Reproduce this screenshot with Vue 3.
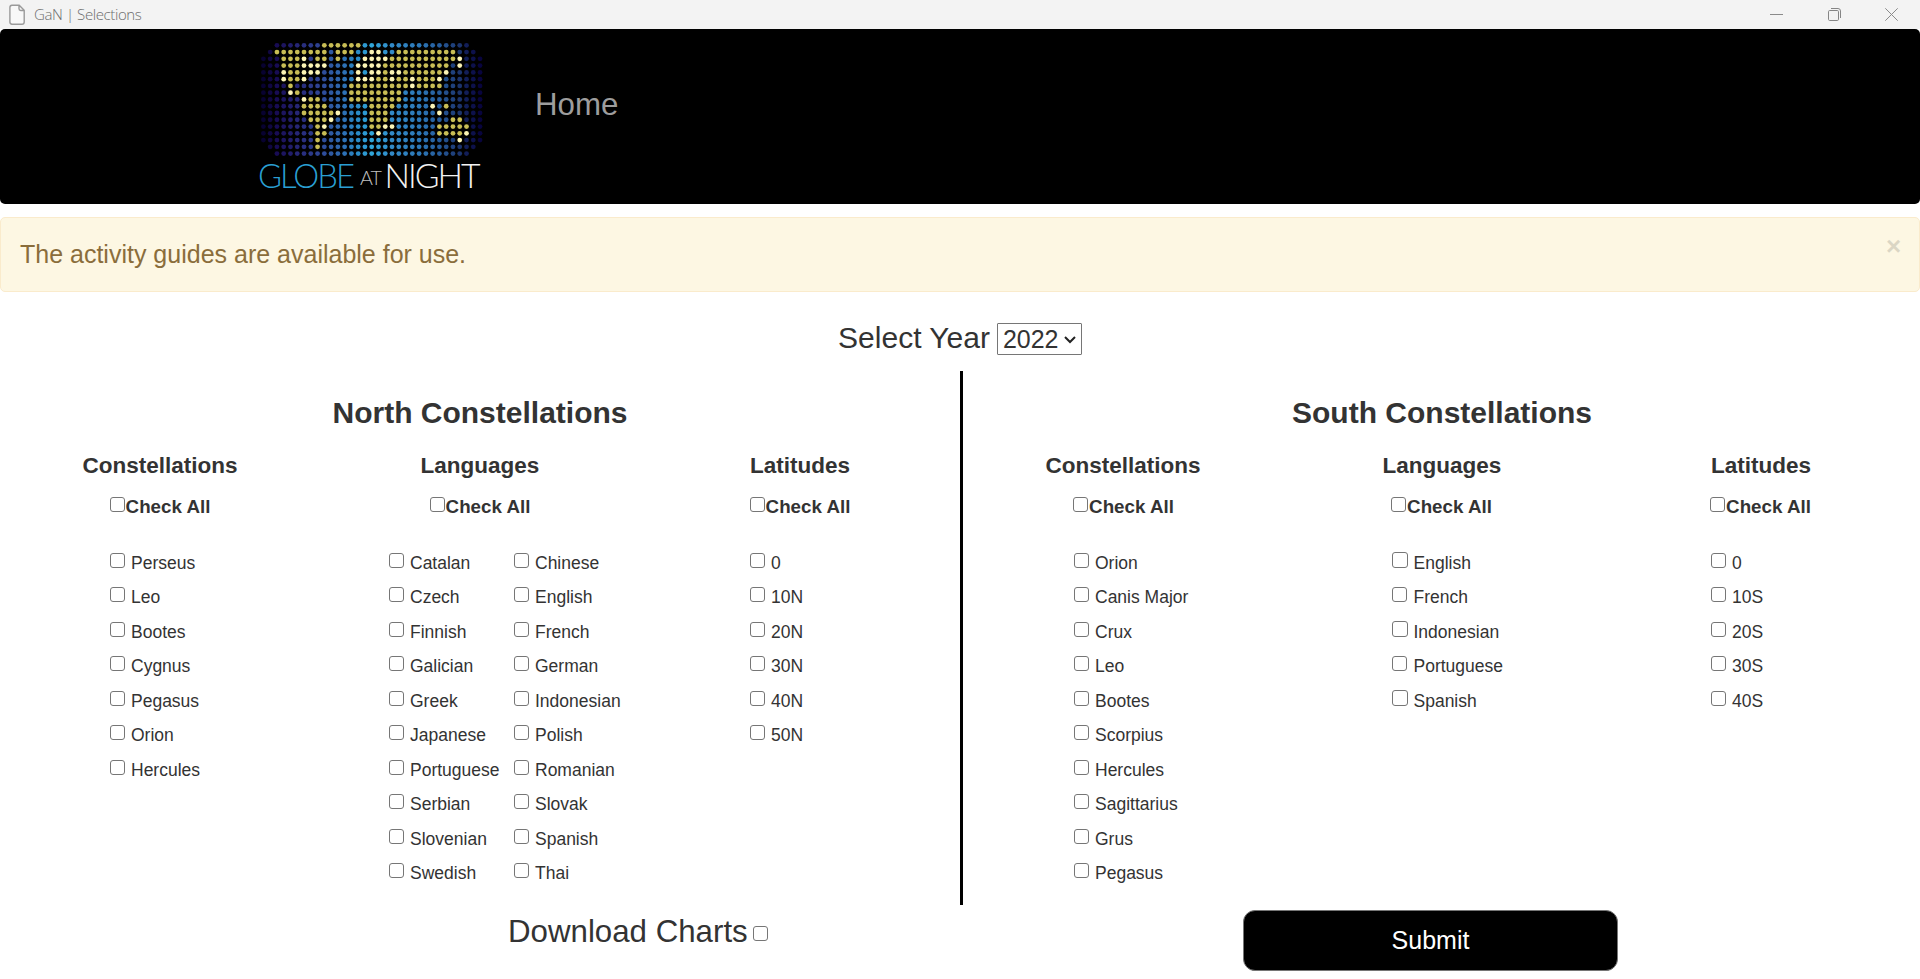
<script setup>
import { ref } from 'vue'

const landRows = [
  '.........yyyyyy..................',
  '..yyyyyyyy.yyy..ww..yyyyyyyyy....',
  '...yyyw.yy.y...wwwwyyyyyyyyyyw...',
  '...yyywwww....wwwwyyyyyyyyyy.w...',
  '...wyywww.....w.wwywwyyyyyyw.....',
  '...wyyw.......wwwyywyywyyyw......',
  '....y........yyyyyyyyywyyyy......',
  '....wy.......yyyyyyyy............',
  '......wyy....yyyyyyyy............',
  '......yyyy......yyyy.....w.y.....',
  '......yyyyyw....yyy.......w......',
  '.......yyyw.....yyy.........yy...',
  '........yw......yyww......yyyyy..',
  '........yy.......w........yyyyw..',
  '........y....................w...',
  '........y........................',
  '.................................',
]

const stops = [
  [0, [8, 2, 48]], [2, [24, 12, 84]], [5, [38, 38, 118]], [8, [46, 66, 146]],
  [11, [46, 100, 172]], [14, [42, 140, 200]], [16, [48, 166, 218]], [19, [50, 138, 200]],
  [23, [44, 120, 184]], [26, [38, 92, 156]], [29, [28, 52, 108]], [30, [18, 30, 88]],
  [32, [8, 4, 62]],
]

function seaColor(col) {
  const i = Math.max(1, stops.findIndex(([at]) => at >= col))
  const [a, from] = stops[i - 1]
  const [b, to] = stops[i]
  const t = (col - a) / (b - a)
  return `rgb(${from.map((v, k) => Math.round(v + (to[k] - v) * t)).join(',')})`
}

const dots = []
landRows.forEach((row, r) => {
  const inset = r === 0 || r === 16 ? 2 : r === 1 || r === 15 ? 1 : 0
  for (let c = inset; c < 33 - inset; c++) {
    const kind = row[c]
    const fill = kind === 'y' ? '#c8bd55' : kind === 'w' ? '#fbf3b4' : seaColor(c)
    dots.push({ id: `${r}-${c}`, x: 5.4 + c * 6.77, y: 6.3 + r * 6.77, fill })
  }
})

const year = ref('2022')
const alertOpen = ref(true)

const panels = [
  {
    id: 'north',
    title: 'North Constellations',
    groups: [
      { title: 'Constellations', cls: 'constellations', lists: [['Perseus', 'Leo', 'Bootes', 'Cygnus', 'Pegasus', 'Orion', 'Hercules']] },
      {
        title: 'Languages',
        cls: 'languages',
        lists: [
          ['Catalan', 'Czech', 'Finnish', 'Galician', 'Greek', 'Japanese', 'Portuguese', 'Serbian', 'Slovenian', 'Swedish'],
          ['Chinese', 'English', 'French', 'German', 'Indonesian', 'Polish', 'Romanian', 'Slovak', 'Spanish', 'Thai'],
        ],
      },
      { title: 'Latitudes', cls: 'latitudes', lists: [['0', '10N', '20N', '30N', '40N', '50N']] },
    ],
  },
  {
    id: 'south',
    title: 'South Constellations',
    groups: [
      { title: 'Constellations', cls: 'constellations', lists: [['Orion', 'Canis Major', 'Crux', 'Leo', 'Bootes', 'Scorpius', 'Hercules', 'Sagittarius', 'Grus', 'Pegasus']] },
      { title: 'Languages', cls: 'languages', lists: [['English', 'French', 'Indonesian', 'Portuguese', 'Spanish']] },
      { title: 'Latitudes', cls: 'latitudes', lists: [['0', '10S', '20S', '30S', '40S']] },
    ],
  },
]
</script>

<template>
  <div class="window">
    <div class="titlebar">
      <svg class="file-icon" width="17" height="22" viewBox="0 0 17 22">
        <path d="M3 1.2h7.2l5 5V18a2.2 2.2 0 0 1-2.2 2.200H3A2.200 2.200 0 0 1 .9 18V3.400A2.200 2.200 0 0 1 3 1.200zM10 1.500v3.300a1.700 1.700 0 0 0 1.700 1.700H15" fill="#f8f8f8" stroke="#9a9a9a" stroke-width="1.400" />
      </svg>
      <span class="window-title">GaN | Selections</span>
      <div class="controls">
        <svg width="13" height="13" viewBox="0 0 13 13"><path d="M0 6.5h13" stroke="#8a8a8a" /></svg>
        <svg width="13" height="13" viewBox="0 0 13 13" fill="none" stroke="#858585">
          <rect x=".5" y="2.500" width="10" height="10" rx="1.200" />
          <path d="M3 .5h7a2.500 2.500 0 0 1 2.500 2.500v7" />
        </svg>
        <svg width="13" height="13" viewBox="0 0 13 13"><path d="M.3.3l12.400 12.400M12.700.3L.3 12.700" stroke="#8a8a8a" /></svg>
      </div>
    </div>

    <nav class="navbar">
      <svg class="logo" width="228" height="160" viewBox="0 0 228 160">
        <circle v-for="d in dots" :key="d.id" :cx="d.x" :cy="d.y" r="2.400" :fill="d.fill" />
        <g class="logo-text">
          <text class="word" x="0" y="149" textLength="95" lengthAdjust="spacingAndGlyphs" fill="#2a9fd2">GLOBE</text>
          <text class="at" x="102" y="146" textLength="21" lengthAdjust="spacingAndGlyphs" fill="#c0c0c0">AT</text>
          <text class="word" x="126.500" y="149" textLength="94" lengthAdjust="spacingAndGlyphs" fill="#f2f2f2">NIGHT</text>
        </g>
      </svg>
      <a class="home">Home</a>
    </nav>

    <div v-if="alertOpen" class="alert">
      <span>The activity guides are available for use.</span>
      <button class="close" aria-label="Close" @click="alertOpen = false">×</button>
    </div>

    <div class="year-row">
      <span>Select Year</span>
      <button class="year-select">
        {{ year }}
        <svg width="12" height="8" viewBox="0 0 12 8"><path d="M1 1l5 5 5-5" fill="none" stroke="#222" stroke-width="2" /></svg>
      </button>
    </div>

    <main class="panels">
      <section v-for="p in panels" :key="p.id" :class="['panel', p.id]">
        <h2>{{ p.title }}</h2>
        <div class="groups">
          <div v-for="g in p.groups" :key="g.title" :class="['group', g.cls]">
            <h3>{{ g.title }}</h3>
            <label class="check-all"><input type="checkbox" />Check All</label>
            <div class="lists">
              <ul v-for="(list, i) in g.lists" :key="i">
                <li v-for="name in list" :key="name">
                  <label><input type="checkbox" />{{ name }}</label>
                </li>
              </ul>
            </div>
          </div>
        </div>
      </section>
    </main>

    <footer class="actions">
      <label class="download">Download Charts<input type="checkbox" /></label>
      <button class="submit">Submit</button>
    </footer>
  </div>
</template>

<style>
html,
body {
  margin: 0;
  background: #fff;
}
</style>

<style scoped>
.window {
  width: 1920px;
  height: 979px;
  overflow: hidden;
  display: flex;
  flex-direction: column;
  background: #fff;
  color: #333;
  font-family: "Liberation Sans", Arial, sans-serif;
  font-size: 17.5px;
}

.window * {
  box-sizing: border-box;
}

.titlebar {
  height: 29px;
  flex: none;
  display: flex;
  align-items: center;
  padding: 0 22px 0 9px;
  background: #f3f3f3;
}

.window-title {
  margin-left: 8px;
  font: 300 15px/29px "Open Sans", "Noto Sans", sans-serif;
  letter-spacing: -0.4px;
  color: #6c6c6c;
}

.controls {
  margin-left: auto;
  display: flex;
  gap: 44.5px;
}

.navbar {
  height: 175px;
  flex: none;
  display: flex;
  padding: 10px 0 0 258px;
  background: #000;
  border-radius: 5px;
}

.home {
  margin: 47px 0 0 49px;
  font-size: 31.25px;
  line-height: 38px;
  color: #9d9d9d;
}

.alert {
  height: 75px;
  flex: none;
  display: flex;
  justify-content: space-between;
  margin-top: 13px;
  padding: 18px 17.5px 0 19px;
  border: 1px solid #faebcc;
  border-radius: 5px;
  background: #fdf7e3;
  color: #8a6d3b;
  font-size: 25px;
  line-height: 36px;
}

.close {
  width: 16px;
  height: 24px;
  margin-top: -2px;
  padding: 0;
  border: 0;
  background: none;
  color: #000;
  opacity: 0.13;
  font: bold 26px/24px "Liberation Sans", Arial, sans-serif;
}

.year-row {
  height: 79px;
  flex: none;
  display: flex;
  justify-content: center;
  padding-top: 31px;
  font-size: 30px;
  line-height: 30px;
}

.year-row span {
  line-height: 29px;
}

.year-select {
  width: 85px;
  height: 32px;
  display: flex;
  align-items: center;
  gap: 5px;
  margin-left: 7px;
  padding: 0 0 0 5px;
  border: 1px solid #767676;
  border-radius: 1px;
  background: #fff;
  color: #333;
  font: 25px/30px "Liberation Sans", Arial, sans-serif;
}

.year-select svg {
  flex: none;
  margin-top: 1px;
}

.panels {
  height: 534px;
  flex: none;
  display: grid;
  grid-template-columns: 963px 957px;
}

.north {
  border-right: 3px solid #000;
}

h2 {
  margin: 0;
  padding-top: 24px;
  text-align: center;
  font-size: 30px;
  line-height: 36px;
}

.groups {
  display: grid;
  grid-template-columns: repeat(3, 1fr);
}

h3 {
  margin: 0;
  padding-top: 21px;
  text-align: center;
  font-size: 22.5px;
  line-height: 28px;
}

.south h2,
.south h3 {
  padding-left: 1px;
}

.check-all {
  display: flex;
  justify-content: center;
  gap: 1px;
  padding: 13px 0 0;
  font-size: 18.75px;
  font-weight: bold;
  line-height: 28px;
}

input {
  appearance: none;
  width: 15px;
  height: 15px;
  flex: none;
  margin: 0;
  border: 1px solid #767676;
  border-radius: 3px;
  background: #fff;
}

.check-all input {
  margin-top: 4px;
}

.south .constellations .check-all {
  padding-left: 2px;
}

.lists {
  display: flex;
  margin-top: 24.7px;
  padding-left: 110px;
}

.north .languages .lists {
  padding-left: 69px;
}

.south .constellations .lists {
  padding-left: 111px;
}

ul {
  width: 125px;
  margin: 0;
  padding: 0;
  list-style: none;
}

li {
  height: 34.5px;
  white-space: nowrap;
}

li label {
  display: flex;
  gap: 6px;
  line-height: 34.5px;
}

li input {
  margin-top: 6.9px;
}

.south .languages li label {
  gap: 6.5px;
}

.south .languages li:nth-child(odd) label {
  gap: 5.5px;
}

.south .languages li:nth-child(odd) input {
  width: 16px;
  height: 16px;
  margin-top: 6.4px;
}

.actions {
  flex: none;
  display: flex;
  align-items: flex-start;
}

.download {
  width: 735px;
  display: flex;
  margin-left: 508px;
  padding-top: 9px;
  font-size: 31.25px;
  line-height: 36px;
}

.download input {
  margin: 12px 0 0 5px;
}

.submit {
  width: 375px;
  height: 61px;
  margin-top: 5px;
  padding: 0 0 1px;
  border: 1px solid #767676;
  border-radius: 12px;
  background: #000;
  color: #fff;
  font: 25px/58px "Liberation Sans", Arial, sans-serif;
}

.logo-text {
  font-family: Lato, "Open Sans", sans-serif;
  font-weight: 300;
}

.word {
  font-size: 33.5px;
  letter-spacing: -2px;
}

.at {
  font-size: 20.5px;
  letter-spacing: -1px;
}
</style>
